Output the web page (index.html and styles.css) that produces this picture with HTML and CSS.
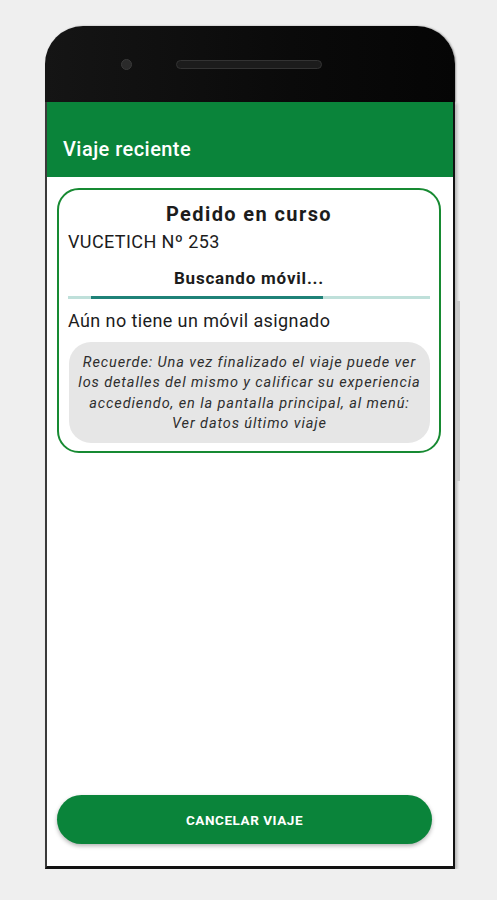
FILE: index.html
```html
<!DOCTYPE html>
<html lang="es">
<head>
    <meta charset="UTF-8">
    <meta name="viewport" content="width=device-width, initial-scale=1.0">
    <title>Viaje reciente</title>
    <link rel="stylesheet" href="styles.css">
</head>
<body>
    <div class="phone">
        <div class="bezel">
            <span class="camera"></span>
            <span class="speaker"></span>
        </div>
        <div class="screen">
            <div class="appbar">Viaje reciente</div>
            <div class="content">
                <div class="card">
                    <h2 class="card-title">Pedido en curso</h2>
                    <p class="address">VUCETICH Nº 253</p>
                    <p class="status">Buscando móvil...</p>
                    <div class="progress"><div class="progress-bar"></div></div>
                    <p class="info">Aún no tiene un móvil asignado</p>
                    <div class="note">
                        Recuerde: Una vez finalizado el viaje puede ver<br>
                        los detalles del mismo y calificar su experiencia<br>
                        accediendo, en la pantalla principal, al menú:<br>
                        Ver datos último viaje
                    </div>
                </div>
                <button class="cancel-button">CANCELAR VIAJE</button>
            </div>
        </div>
        <span class="side-btn"></span>
    </div>
</body>
</html>
```

FILE: styles.css
```css
/* Basic styling */
body {
    font-family: Roboto, 'Liberation Sans', sans-serif;
    background: #efefef;
    margin: 0;
    padding: 0;
}

.phone {
    position: relative;
    width: 410px;
    margin: 26px 0 0 45px;
}

.bezel {
    height: 76px;
    background: linear-gradient(to right, #151515, #0a0a0a 60%, #050505);
    border-radius: 38px 38px 0 0;
    box-shadow: 1px 0 2px rgba(0, 0, 0, 0.35);
    display: flex;
    align-items: center;
}

.camera {
    width: 9px;
    height: 9px;
    margin-left: 76px;
    border-radius: 50%;
    background: #2a2a2a;
    border: 1px solid #3a3a3a;
}

.speaker {
    width: 144px;
    height: 7px;
    margin-left: 44px;
    border-radius: 5px;
    background: #1c1c1c;
    border: 1px solid #333;
}

.screen {
    border-left: 2px solid #3a3a3a;
    border-right: 2px solid #111;
    border-bottom: 3px solid #111;
    background: #fff;
    box-shadow: 2px 1px 3px rgba(0, 0, 0, 0.25);
}

.appbar {
    height: 75px;
    background: #0a843a;
    color: #fff;
    font-size: 20px;
    font-weight: 500;
    letter-spacing: 0.45px;
    padding: 35px 0 0 16px;
    box-sizing: border-box;
}

.content {
    height: 689px;
    display: flex;
    flex-direction: column;
    justify-content: space-between;
    padding: 11px 0 22px;
    box-sizing: border-box;
}

.card {
    margin: 0 12px 0 10px;
    padding: 12px 9px 8px;
    border: 2px solid #178a32;
    border-radius: 22px;
    color: #1c1c1c;
}

.card-title {
    margin: 0;
    font-size: 20px;
    font-weight: 700;
    letter-spacing: 1.4px;
    line-height: 24px;
    text-align: center;
}

.address, .info {
    margin: 5px 0 0;
    font-size: 18px;
    letter-spacing: 0.4px;
    line-height: 22px;
}

.status {
    margin: 14px 0 0;
    font-size: 17px;
    font-weight: 700;
    letter-spacing: 0.8px;
    line-height: 22px;
    text-align: center;
}

.progress {
    margin-top: 7px;
    height: 3px;
    background: #bfe0da;
}

.progress-bar {
    margin-left: 23px;
    width: 232px;
    height: 3px;
    background: #1f8278;
}

.info {
    margin-top: 11px;
}

.note {
    margin: 10px 0 0 1px;
    padding: 11px 4px 9px;
    background: #e6e6e6;
    border-radius: 22px;
    color: #2e2e2e;
    font-size: 14.5px;
    font-style: italic;
    letter-spacing: 0.9px;
    line-height: 20.3px;
    text-align: center;
    white-space: nowrap;
}

.cancel-button {
    margin: 0 21px 0 10px;
    height: 49px;
    border: none;
    border-radius: 25px;
    background: #0a843a;
    color: #fff;
    font-family: Roboto, sans-serif;
    font-size: 13.5px;
    font-weight: 700;
    letter-spacing: 0.55px;
    box-shadow: 0 2px 4px rgba(0, 0, 0, 0.3);
}

.side-btn {
    position: absolute;
    right: -5px;
    top: 275px;
    width: 3px;
    height: 180px;
    background: #c9c9c9;
}
```
